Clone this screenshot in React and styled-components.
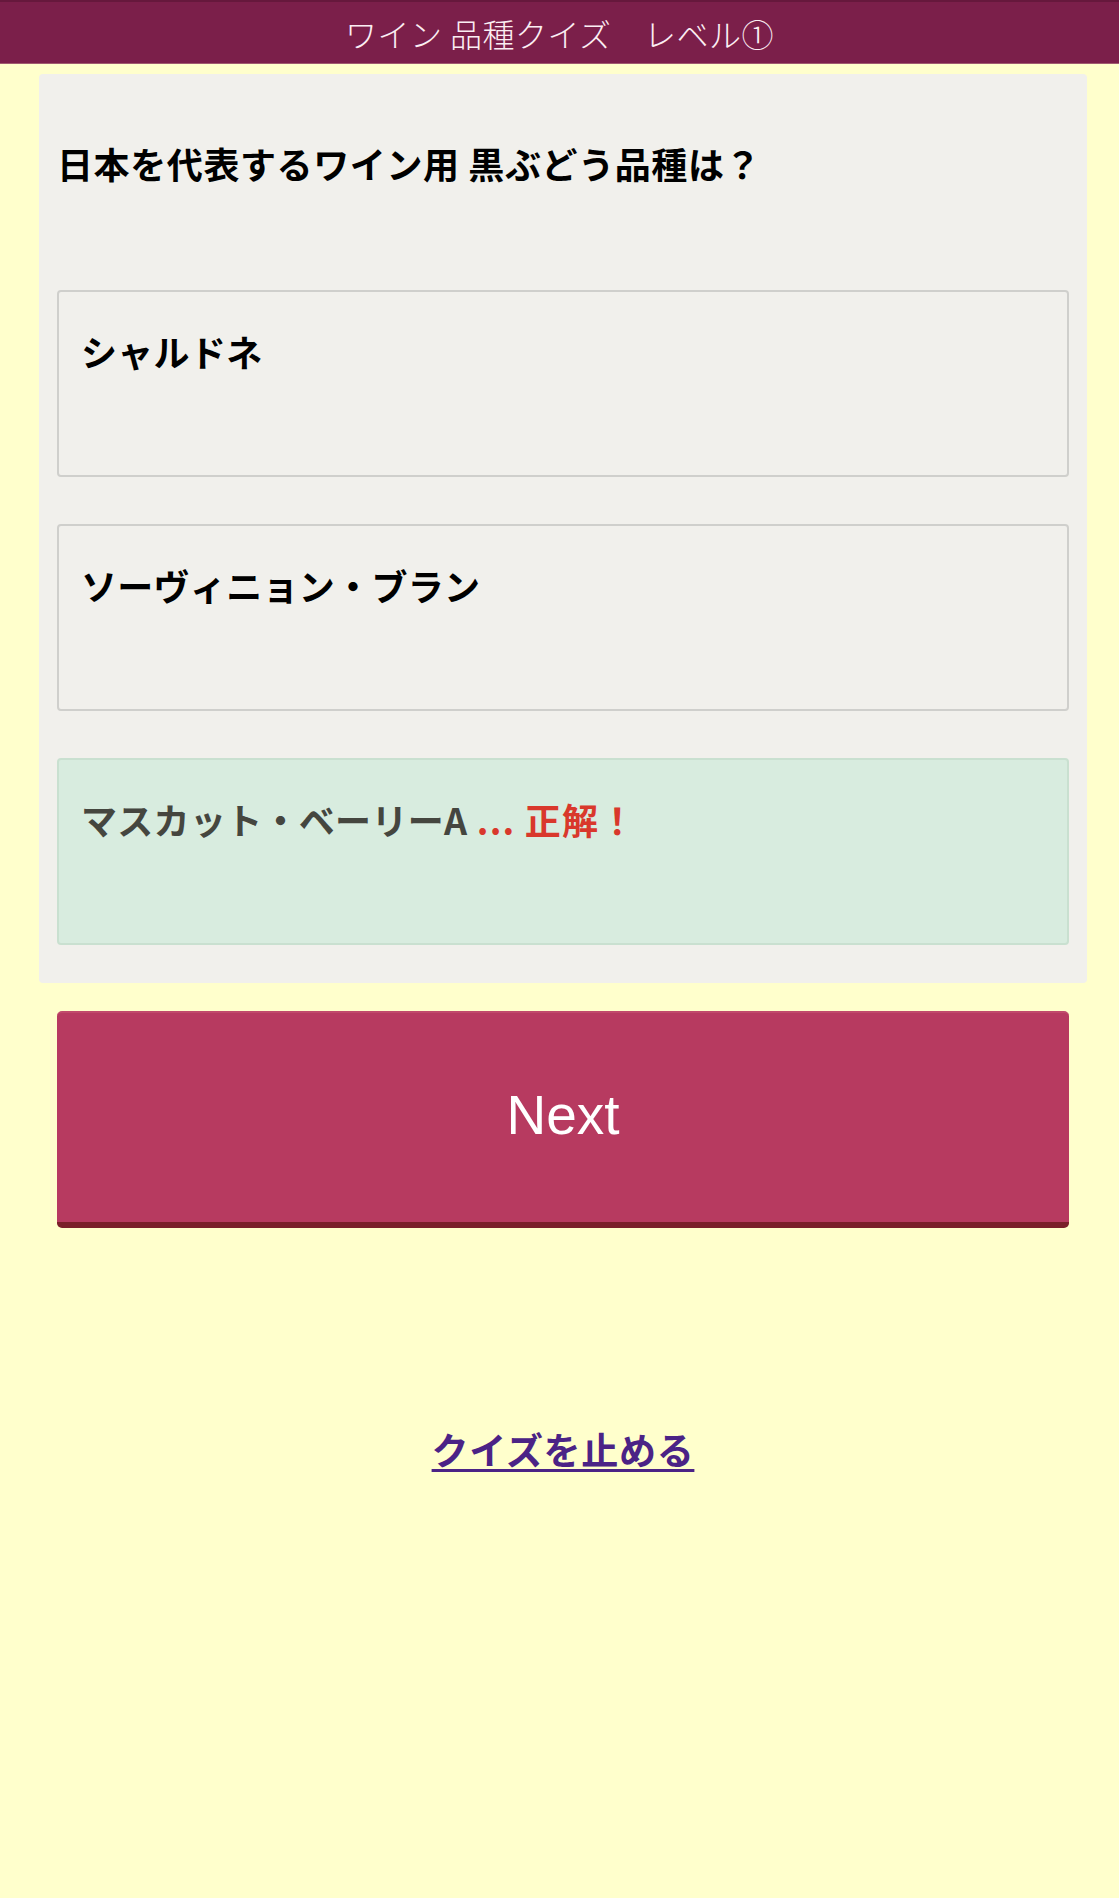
import React from "react";
import styled, { createGlobalStyle } from "styled-components";

const Global = createGlobalStyle`
  html, body {
    margin: 0;
    padding: 0;
    background: #ffffcc;
    font-family: "Noto Sans CJK JP", "Noto Sans", "Liberation Sans", sans-serif;
  }
  #root {
    min-height: 1898px;
  }
`;

const Header = styled.header`
  height: 64px;
  box-sizing: border-box;
  background: #7b1f4a;
  border-top: 2px solid #66183c;
  border-bottom: 1px solid #a05a70;
  display: flex;
  align-items: center;
  justify-content: center;
  color: #fbeef3;
  font-size: 32px;
  font-weight: 300;
  letter-spacing: 0.5px;
  white-space: pre;
`;

const Main = styled.main`
  padding: 10px 32px 0 39px;
`;

const Card = styled.section`
  background: #f1f0ec;
  border-radius: 4px;
  padding: 0 18px 38px;
`;

const Question = styled.h2`
  margin: 0 0 100px;
  padding: 62px 0 0;
  font-size: 36px;
  line-height: 54px;
  font-weight: 700;
  letter-spacing: 0.6px;
  color: #000;
`;

const Options = styled.div`
  display: flex;
  flex-direction: column;
  gap: 47px;
`;

const Option = styled.div`
  height: 187px;
  box-sizing: border-box;
  border: 2px solid ${(p) => (p.$correct ? "#c9e0d0" : "#cfcfcc")};
  border-radius: 4px;
  background: ${(p) => (p.$correct ? "#d8ecdf" : "#f1f0ec")};
  padding: 32px 22px;
  font-size: 36px;
  line-height: 54px;
  font-weight: 700;
  letter-spacing: 0.3px;
  color: ${(p) => (p.$correct ? "#45463f" : "#000")};
`;

const Verdict = styled.span`
  color: #d9382c;
  letter-spacing: 1.2px;
`;

const NextButton = styled.button`
  display: flex;
  align-items: center;
  justify-content: center;
  width: calc(100% - 36px);
  margin: 28px 18px 0;
  height: 217px;
  box-sizing: border-box;
  padding: 0 0 6px;
  background: #b73a60;
  border: none;
  border-top: 2px solid #c04a6c;
  border-bottom: 6px solid #7a1f2a;
  border-radius: 5px;
  color: #fff;
  font-family: "Liberation Sans", Arial, sans-serif;
  font-size: 55px;
  font-weight: 400;
  cursor: pointer;
`;

const Footer = styled.div`
  text-align: center;
  padding-top: 194px;
`;

const StopLink = styled.a`
  font-size: 37px;
  line-height: 54px;
  font-weight: 700;
  letter-spacing: 0.7px;
  color: #4b2386;
  text-decoration: underline;
  text-decoration-thickness: 3px;
  text-underline-offset: 4px;
`;

const options = [
  { label: "シャルドネ" },
  { label: "ソーヴィニョン・ブラン" },
  { label: "マスカット・ベーリーA", correct: true },
];

export default function App() {
  return (
    <>
      <Global />
      <Header>{"ワイン 品種クイズ　レベル①"}</Header>
      <Main>
        <Card>
          <Question>日本を代表するワイン用 黒ぶどう品種は？</Question>
          <Options>
            {options.map((o) => (
              <Option key={o.label} $correct={o.correct}>
                {o.label}
                {o.correct && <Verdict> ... 正解！</Verdict>}
              </Option>
            ))}
          </Options>
        </Card>
        <NextButton>Next</NextButton>
        <Footer>
          <StopLink href="#">クイズを止める</StopLink>
        </Footer>
      </Main>
    </>
  );
}
